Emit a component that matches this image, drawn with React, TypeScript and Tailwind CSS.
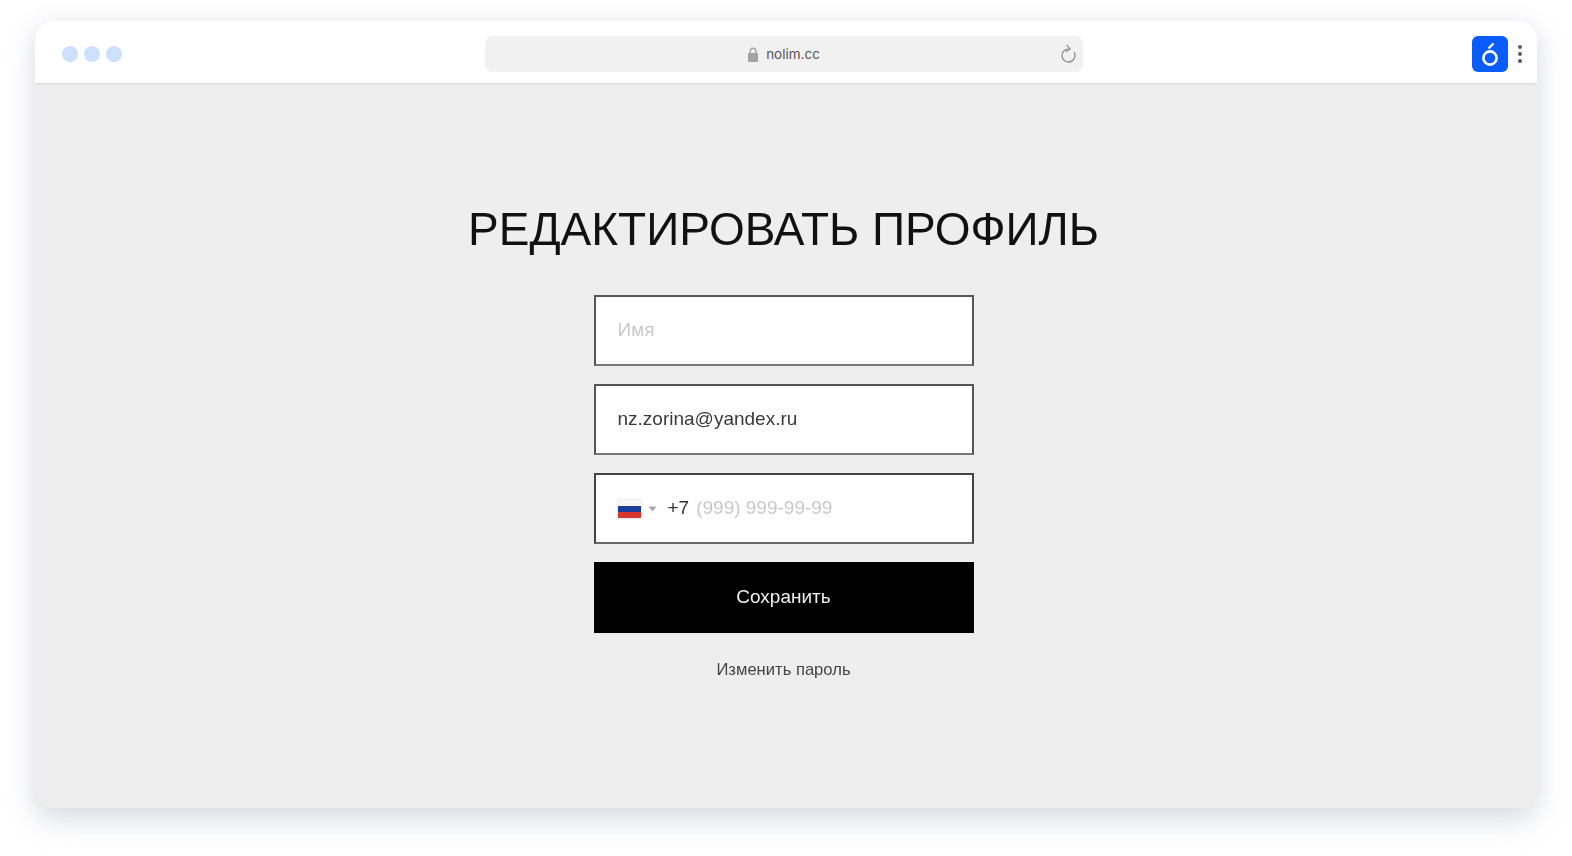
export default function App() {
  const sans = "font-['Liberation_Sans',Arial,sans-serif]";
  return (
    <div className="w-[1572px] h-[856px] bg-white pt-[21px] pl-[35px] overflow-hidden">
      <div className="w-[1502px] h-[787px] rounded-[18px] bg-[#eeeeee] flex flex-col overflow-hidden" style={{ boxShadow: "0 14px 28px rgba(170,175,195,0.35), 0 0 24px rgba(190,195,210,0.22)" }}>
        <header className="h-[62px] shrink-0 bg-white flex items-center relative shadow-[0_1px_3px_rgba(0,0,0,0.1)] pl-[27px] pr-[15px]">
          <div className="flex gap-[6px] w-[450px] mt-[4px]">
            <span className="w-[16px] h-[16px] rounded-full bg-[#cfdfff]" />
            <span className="w-[16px] h-[16px] rounded-full bg-[#cfdfff]" />
            <span className="w-[16px] h-[16px] rounded-full bg-[#cfdfff]" />
          </div>
          <div className="absolute left-[450px] top-[15px] w-[598px] h-[36px] rounded-[8px] bg-[#f1f1f1] flex items-center justify-center">
            <svg width="10" height="15" viewBox="0 0 10 15" className="mr-[8px]">
              <path d="M2.2 6.5V4a2.8 2.8 0 0 1 5.6 0v2.5" fill="none" stroke="#a3a3a3" strokeWidth="1.4" />
              <rect x="0" y="6" width="10" height="9" rx="1" fill="#a3a3a3" />
            </svg>
            <span className="font-['Inter',sans-serif] text-[13.5px] text-[#555555]">nolim.cc</span>
            <svg width="16" height="20" viewBox="0 0 16 20" className="absolute right-[7px] top-[8px]" fill="none" stroke="#7d7d7d" strokeWidth="1.1">
              <path d="M8.5 5A6.5 6.5 0 1 0 14.1 8.25" />
              <path d="M6.7 1 10 5 6 7.7" />
            </svg>
          </div>
          <div className="ml-auto flex items-center gap-[10px] mt-[4px]">
            <div className="w-[36px] h-[36px] rounded-[6px] bg-[#0a5cff] flex items-center justify-center">
              <svg width="24" height="28" viewBox="0 0 24 28" fill="none">
                <circle cx="12" cy="18" r="6.6" stroke="white" strokeWidth="2.6" />
                <path d="M10.5 8.5 15.5 3.5" stroke="white" strokeWidth="2.4" />
              </svg>
            </div>
            <div className="flex flex-col gap-[3px]">
              <span className="w-[4px] h-[4px] rounded-full bg-[#555c66]" />
              <span className="w-[4px] h-[4px] rounded-full bg-[#555c66]" />
              <span className="w-[4px] h-[4px] rounded-full bg-[#555c66]" />
            </div>
          </div>
        </header>
        <main className="flex flex-col items-center pr-[5px]">
          <h1 className={`mt-[115px] h-[62px] leading-[62px] font-normal text-[46px] tracking-[0px] text-[#111111] whitespace-nowrap blur-[0.3px] ${sans}`}>РЕДАКТИРОВАТЬ ПРОФИЛЬ</h1>
          <div className={`mt-[35px] w-[380px] flex flex-col gap-[18px] ${sans}`}>
            <div className="h-[71px] bg-white border-2 border-[#555555] border-b-[#777777] flex items-center pl-[22px] text-[19px] text-[#c9c9c9]"><span className="blur-[0.4px]">Имя</span></div>
            <div className="h-[71px] bg-white border-2 border-[#555555] border-b-[#777777] flex items-center pl-[22px] text-[19px] text-[#3a3a3a]"><span className="blur-[0.4px]">nz.zorina@yandex.ru</span></div>
            <div className="h-[71px] bg-white border-2 border-[#444444] border-b-[#666666] flex items-center pl-[22px] text-[19px]">
              <span className="w-[23px] h-[18px] flex flex-col mt-[1px] shadow-[0_0_2px_rgba(0,0,0,0.2)] blur-[0.4px]">
                <span className="flex-1 bg-[#f7f7f7]" />
                <span className="flex-1 bg-[#1c3f9c]" />
                <span className="flex-1 bg-[#d9362f]" />
              </span>
              <svg width="9" height="6" viewBox="0 0 9 6" className="ml-[7px] mt-[1px]">
                <path d="M0.5 0.5h8L4.5 5.5z" fill="#a8a8a8" />
              </svg>
              <span className="ml-[11px] text-[#333333] blur-[0.4px]">+7</span>
              <span className="ml-[7px] text-[#c9c9c9] blur-[0.4px]">(999) 999-99-99</span>
            </div>
            <button className="h-[71px] bg-black text-[#eeeeee] text-[19px]"><span className="blur-[0.4px]">Сохранить</span></button>
          </div>
          <a className={`mt-[25px] text-[16.6px] text-[#444444] blur-[0.4px] ${sans}`}>Изменить пароль</a>
        </main>
      </div>
    </div>
  );
}
